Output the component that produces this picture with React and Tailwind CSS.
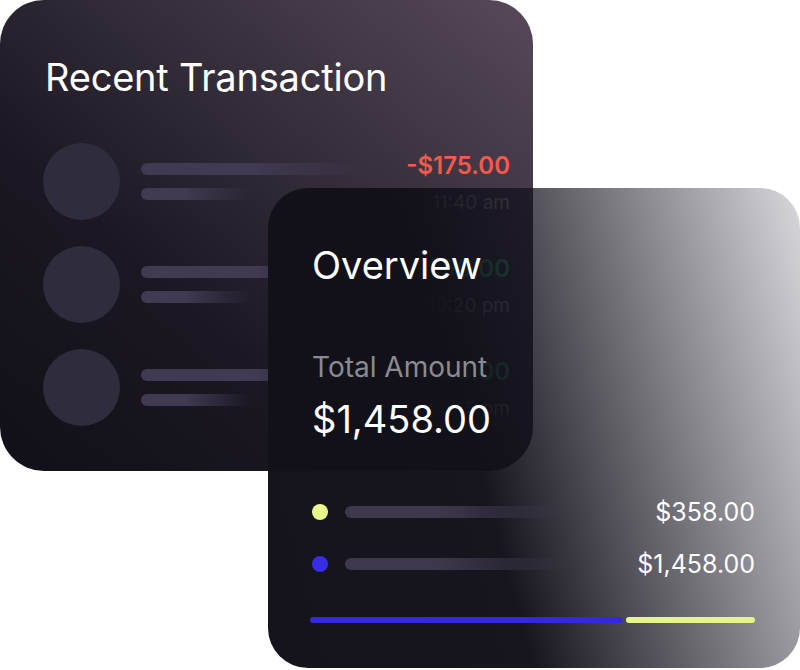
export default function App() {
  const rows = [
    { amount: "-$175.00", color: "text-[#f25a4b]", time: "11:40 am" },
    { amount: "+$250.00", color: "text-[#2fc283]", time: "10:20 pm" },
    { amount: "+$120.00", color: "text-[#2fc283]", time: "08:15 pm" },
  ];
  return (
    <div className="relative w-[800px] h-[670px] bg-white overflow-hidden font-[Inter,sans-serif]">
      {/* Recent Transaction card */}
      <div className="absolute left-0 top-0 w-[533px] h-[471px] rounded-[44px] bg-[linear-gradient(to_top_right,#110f17_0%,#1b1823_35%,#574959_100%)] pl-[43px] pr-[23px] pt-[58px] flex flex-col">
        <h2 className="text-[38px] leading-none text-white font-normal tracking-[-0.2px] pl-[2px]">
          Recent Transaction
        </h2>
        <div className="mt-[47px] flex flex-col gap-[26px]">
          {rows.map((r, i) => (
            <div key={i} className="flex items-center h-[77px]">
              <div className="w-[77px] h-[77px] rounded-full bg-[#2f2c3d] shrink-0" />
              <div className="ml-[21px] flex flex-col gap-[13px] flex-1 min-w-0 mr-[20px]">
                <div className="h-[12px] w-[230px] rounded-full bg-[linear-gradient(to_right,#403a52_0%,#403a52_50%,rgba(64,58,82,0)_100%)]" />
                <div className="h-[12px] w-[110px] rounded-full bg-[linear-gradient(to_right,#403a52_0%,#403a52_40%,rgba(64,58,82,0)_100%)]" />
              </div>
              <div className="flex flex-col items-end gap-[15px] shrink-0 mt-[3px]">
                <span className={`text-[24px] leading-none font-semibold ${r.color}`}>{r.amount}</span>
                <span className="text-[19px] leading-none text-[#a09daf]">{r.time}</span>
              </div>
            </div>
          ))}
        </div>
      </div>

      {/* Overview card */}
      <div className="absolute left-[268px] top-[188px] w-[532px] h-[480px] rounded-[40px] bg-[linear-gradient(75deg,rgba(18,17,26,0.99)_0%,rgba(18,17,26,0.98)_40%,rgba(22,20,48,0.17)_100%)] pl-[44px] pr-[45px] pt-[58px] flex flex-col">
        <h2 className="text-[38px] leading-none text-white font-normal">Overview</h2>
        <div className="mt-[69px] text-[28px] leading-none text-[#8b8a92]">Total Amount</div>
        <div className="mt-[19px] text-[38px] leading-none text-white">$1,458.00</div>

        <div className="mt-[66px] flex flex-col gap-[36px]">
          <div className="flex items-center h-[16px]">
            <div className="w-[16px] h-[16px] rounded-full bg-[#e8fa8c] shrink-0" />
            <div className="ml-[17px] h-[12px] w-[230px] rounded-full bg-[linear-gradient(to_right,#3e384c_0%,#3e384c_40%,rgba(62,56,76,0)_100%)]" />
            <span className="ml-auto text-[25px] leading-none text-white">$358.00</span>
          </div>
          <div className="flex items-center h-[16px]">
            <div className="w-[16px] h-[16px] rounded-full bg-[#372de6] shrink-0" />
            <div className="ml-[17px] h-[12px] w-[230px] rounded-full bg-[linear-gradient(to_right,#3e384c_0%,#3e384c_40%,rgba(62,56,76,0)_100%)]" />
            <span className="ml-auto text-[25px] leading-none text-white">$1,458.00</span>
          </div>
        </div>

        <div className="mt-[45px] flex gap-[4px] h-[6px] -ml-[2px]">
          <div className="w-[312px] h-full rounded-full bg-[#3329e3]" />
          <div className="flex-1 h-full rounded-full bg-[#e6f58a]" />
        </div>
      </div>
    </div>
  );
}
